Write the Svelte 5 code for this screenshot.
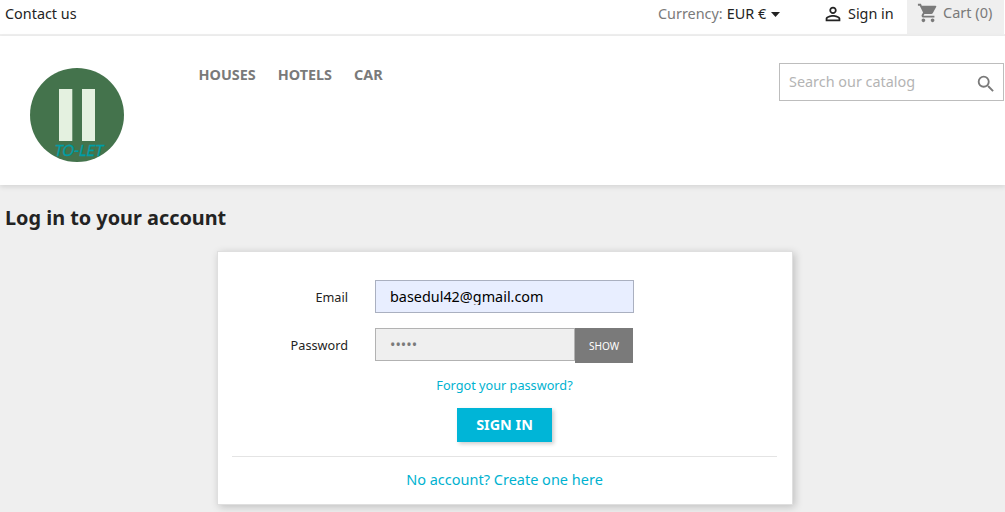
<script>
  const menu = ['Houses', 'Hotels', 'Car'];
</script>

<div class="page">
  <nav class="topbar">
    <a class="contact" href="#contact">Contact us</a>
    <div class="currency">
      <span class="muted">Currency:</span>
      <span>EUR €</span>
      <svg class="caret" width="9" height="5" viewBox="0 0 9 5"><path d="M0 0h9L4.500 5z" fill="#232323" /></svg>
    </div>
    <a class="signin" href="#signin">
      <svg width="22" height="22" viewBox="0 0 24 24" fill="#232323"><path d="M12 5.900a2.100 2.100 0 1 1 0 4.200 2.100 2.100 0 0 1 0-4.200m0 9c2.970 0 6.100 1.460 6.100 2.100v1.100H5.900V17c0-.64 3.130-2.100 6.100-2.100M12 4C9.790 4 8 5.790 8 8s1.790 4 4 4 4-1.790 4-4-1.790-4-4-4zm0 9c-2.670 0-8 1.340-8 4v3h16v-3c0-2.660-5.330-4-8-4z" /></svg>
      <span>Sign in</span>
    </a>
    <div class="cart">
      <svg width="22" height="22" viewBox="0 0 24 24" fill="#7a7a7a"><path d="M7 18c-1.100 0-1.990.9-1.990 2S5.900 22 7 22s2-.9 2-2-.9-2-2-2zM1 2v2h2l3.600 7.590-1.350 2.450c-.16.280-.25.610-.25.960 0 1.100.9 2 2 2h12v-2H7.420c-.14 0-.25-.11-.25-.25l.03-.12.900-1.630h7.450c.75 0 1.410-.41 1.750-1.030l3.580-6.490A1 1 0 0 0 20 4H5.210l-.94-2H1zm16 16c-1.100 0-1.990.9-1.990 2s.89 2 1.990 2 2-.9 2-2-.9-2-2-2z" /></svg>
      <span>Cart (0)</span>
    </div>
  </nav>

  <header>
    <svg class="logo" width="94" height="94" viewBox="0 0 94 94">
      <circle cx="47" cy="47" r="47" fill="#44734c" />
      <path d="M29 21h13.300v52H29zM52 21h13v52H52z" fill="#e4f1e0" />
      <text transform="translate(23.500 87.500) skewX(-12)" textLength="49" lengthAdjust="spacingAndGlyphs">TO-LET</text>
    </svg>
    <ul class="menu">
      {#each menu as item}
        <li>{item}</li>
      {/each}
    </ul>
    <div class="search">
      <span>Search our catalog</span>
      <svg width="22" height="22" viewBox="0 0 24 24" fill="#7a7a7a"><path d="M15.500 14h-.79l-.28-.27A6.470 6.470 0 0 0 16 9.500 6.500 6.500 0 1 0 9.500 16c1.610 0 3.090-.59 4.230-1.570l.27.28v.79l5 4.990L20.490 19l-4.990-5zm-6 0C7.010 14 5 11.990 5 9.500S7.010 5 9.500 5 14 7.010 14 9.500 11.990 14 9.500 14z" /></svg>
    </div>
  </header>

  <main>
    <h1>Log in to your account</h1>
    <section class="card">
      <div class="row">
        <label for="email">Email</label>
        <div class="field filled" id="email"><span>basedul42@gmail.com</span></div>
      </div>
      <div class="row second">
        <label for="password">Password</label>
        <div class="field short" id="password"><span>•••••</span></div>
        <button class="show">SHOW</button>
      </div>
      <a class="forgot" href="#forgot">Forgot your password?</a>
      <button class="submit">SIGN IN</button>
      <a class="create" href="#create">No account? Create one here</a>
    </section>
  </main>
</div>

<style>
  :global(body) {
    margin: 0;
    overflow: hidden;
    background: #efefef;
  }
  .page {
    box-sizing: border-box;
    height: 512px;
    overflow: hidden;
    font-family: "Noto Sans", sans-serif;
    font-size: 14.400px;
    line-height: 20px;
    color: #232323;
  }
  a {
    color: inherit;
    text-decoration: none;
  }
  svg {
    display: block;
    flex: none;
  }
  button {
    border: 0;
    padding: 0;
    font-family: inherit;
    color: #fff;
  }
  .topbar {
    box-sizing: border-box;
    height: 36px;
    display: flex;
    align-items: flex-start;
    background: #fff;
    border-bottom: 2px solid #efefef;
    white-space: nowrap;
  }
  .contact {
    margin: 4px auto 0 5px;
  }
  .currency {
    display: flex;
    gap: 4px;
    margin-top: 4px;
    width: 165px;
  }
  .muted {
    color: #7a7a7a;
  }
  .caret {
    margin: 8px 0 0 1px;
  }
  .signin {
    display: flex;
    gap: 4px;
    margin-top: 4px;
    width: 85px;
    margin-left: -1px;
  }
  .signin svg {
    margin-top: -1px;
  }
  .cart {
    box-sizing: border-box;
    width: 97px;
    height: 34px;
    margin-right: 1px;
    padding: 2px 0 0 10px;
    display: flex;
    gap: 4px;
    background: #efefef;
    color: #7a7a7a;
  }
  .cart span {
    font-size: 14.500px;
  }
  header {
    box-sizing: border-box;
    height: 149px;
    padding: 27px 1px 0 30px;
    display: flex;
    align-items: flex-start;
    background: #fff;
    box-shadow: 0 2px 5px rgba(0, 0, 0, 0.110);
    position: relative;
  }
  .logo {
    margin-top: 5px;
  }
  .logo text {
    font-family: Lato, "Noto Sans", sans-serif;
    font-size: 15.500px;
    fill: #009da5;
    stroke: #009da5;
    stroke-width: 0.350px;
  }
  .menu {
    display: flex;
    gap: 22px;
    margin: 2px auto 0 74.500px;
    padding: 0;
    list-style: none;
    font-weight: 700;
    text-transform: uppercase;
    color: #7a7a7a;
  }
  .search {
    box-sizing: border-box;
    width: 225px;
    height: 38px;
    border: 1px solid #bdbdbd;
    padding: 8px 6px 0 9px;
    display: flex;
    justify-content: space-between;
    color: #b4b4b4;
  }
  .search svg {
    margin-top: 1px;
  }
  h1 {
    margin: 0;
    padding: 19px 0 0 5px;
    font-size: 19.850px;
    line-height: 28px;
    font-weight: 700;
  }
  .card {
    box-sizing: border-box;
    width: 576px;
    height: 254px;
    margin: 19px auto 0 217px;
    border: 1px solid #dfdfdf;
    padding: 28px 15px 0 14px;
    background: #fff;
    box-shadow: 2px 2px 8px rgba(0, 0, 0, 0.200);
    display: flex;
    flex-direction: column;
    align-items: center;
  }
  .row {
    align-self: stretch;
    display: flex;
    height: 35px;
  }
  .second {
    margin-top: 13px;
  }
  label {
    width: 116px;
    margin-right: 27px;
    padding-top: 7px;
    text-align: right;
    font-size: 12.700px;
  }
  .field {
    box-sizing: border-box;
    width: 259px;
    height: 33px;
    border: 1px solid #b2b2b2;
    padding: 7px 14px;
    background: #efefef;
    color: #7a7a7a;
  }
  .field span {
    display: block;
    height: 17px;
    line-height: 17px;
    overflow: hidden;
  }
  .filled {
    background: #e8eeff;
    border-color: #aab0c0;
    color: #000;
  }
  .short {
    width: 200px;
  }
  .show {
    width: 58px;
    height: 35px;
    background: #7a7a7a;
    font-size: 10.100px;
  }
  .forgot {
    margin-top: 12px;
    font-size: 12.700px;
    color: #00b2d0;
  }
  .submit {
    width: 95px;
    height: 34px;
    margin-top: 13px;
    padding-bottom: 2px;
    background: #00b5d7;
    box-shadow: 2px 2px 4px rgba(0, 0, 0, 0.200);
    font-size: 14.400px;
    font-weight: 700;
  }
  .create {
    align-self: stretch;
    margin-top: 14px;
    padding-top: 12px;
    border-top: 1px solid #e4e4e4;
    text-align: center;
    font-size: 14.500px;
    line-height: 20px;
    color: #00b2d0;
  }
</style>
